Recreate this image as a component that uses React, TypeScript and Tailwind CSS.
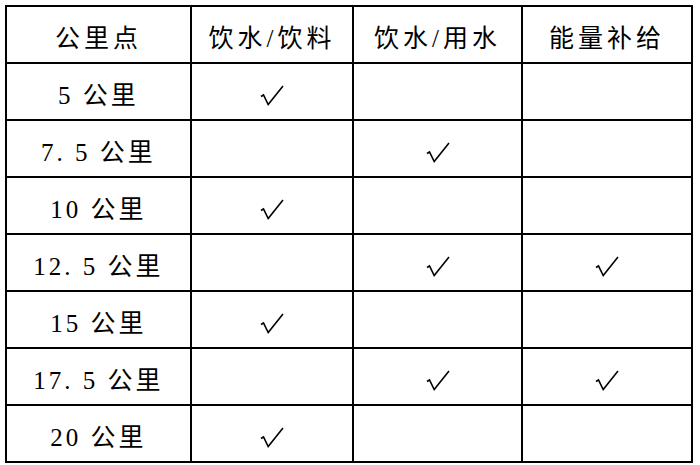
import React from 'react'

const cell =
  "border-2 border-black pt-2 text-center align-middle text-[25px] font-normal font-['Liberation_Serif','Noto_Sans_CJK_SC',serif]"

const headers = ['公里点', '饮水/饮料', '饮水/用水', '能量补给']
const widths = ['w-[185px]', 'w-[162px]', 'w-[169px]', 'w-[170px]']

const rows: { km: string; marks: [boolean, boolean, boolean] }[] = [
  { km: '5 公里', marks: [true, false, false] },
  { km: '7. 5 公里', marks: [false, true, false] },
  { km: '10 公里', marks: [true, false, false] },
  { km: '12. 5 公里', marks: [false, true, true] },
  { km: '15 公里', marks: [true, false, false] },
  { km: '17. 5 公里', marks: [false, true, true] },
  { km: '20 公里', marks: [true, false, false] },
]

function Check() {
  return (
    <svg width="24" height="21" viewBox="0 0 24 21" fill="none" aria-hidden="true">
      <path
        d="M1 11.5 L3.5 10 L8.2 19.5 L23 1"
        stroke="#000"
        strokeWidth="1.6"
        strokeLinejoin="miter"
        strokeLinecap="butt"
      />
    </svg>
  )
}

export default function App() {
  return (
    <div className="h-[465px] w-[700px] bg-white pl-[5px] pt-[5px] text-black">
      <table className="border-collapse">
        <thead>
          <tr className="h-[57px]">
            {headers.map((h, i) => (
              <th key={h} className={`${cell} ${widths[i]} tracking-[4px]`}>
                {h}
              </th>
            ))}
          </tr>
        </thead>
        <tbody>
          {rows.map((r) => (
            <tr key={r.km} className="h-[57px]">
              <td className={`${cell} tracking-[3px]`}>{r.km}</td>
              {r.marks.map((m, j) => (
                <td key={j} className={cell}>
                  {m && (
                    <div className="flex justify-center">
                      <Check />
                    </div>
                  )}
                </td>
              ))}
            </tr>
          ))}
        </tbody>
      </table>
    </div>
  )
}
